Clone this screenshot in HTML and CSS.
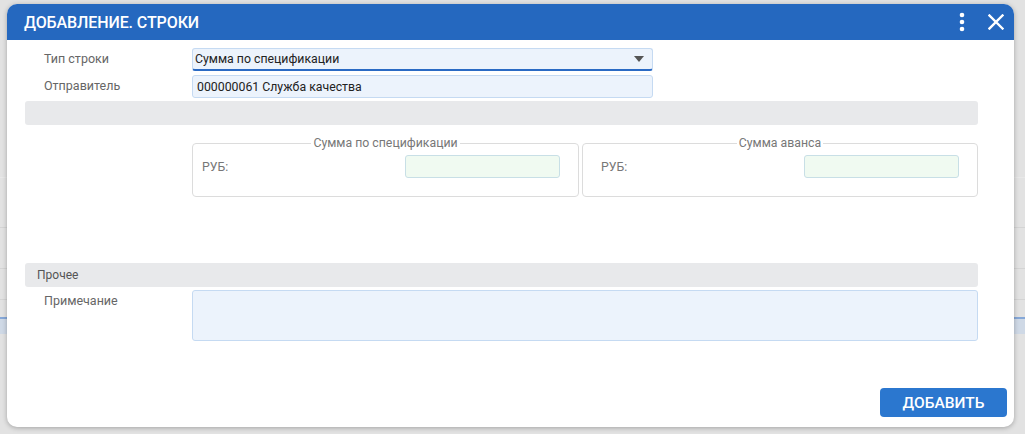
FILE: index.html
```html
<!DOCTYPE html>
<html lang="ru">
<head>
<meta charset="utf-8">
<title>Добавление. Строки</title>
<link rel="stylesheet" href="styles.css">
</head>
<body>
<div class="backdrop">
  <div class="bg-row bg-row-a"></div>
  <div class="bg-row bg-row-b"></div>
  <div class="bg-row bg-row-c"></div>
  <div class="bg-row bg-row-d"></div>
  <div class="bg-row bg-row-sel"></div>
</div>

<div class="modal">
  <div class="modal-header">
    <div class="modal-title">ДОБАВЛЕНИЕ. СТРОКИ</div>
    <div class="header-actions">
      <svg class="icon-kebab" width="6" height="20" viewBox="0 0 6 20"><circle cx="3" cy="3" r="2.3" fill="#fff"/><circle cx="3" cy="10" r="2.3" fill="#fff"/><circle cx="3" cy="17" r="2.3" fill="#fff"/></svg>
      <svg class="icon-close" width="16" height="16" viewBox="0 0 16 16"><path d="M1.5 1.5L14.5 14.5M14.5 1.5L1.5 14.5" stroke="#fff" stroke-width="2.4" stroke-linecap="square"/></svg>
    </div>
  </div>

  <div class="modal-body">
    <div class="form-row">
      <div class="label">Тип строки</div>
      <div class="field select">
        <span>Сумма по спецификации</span>
        <svg class="caret" width="10" height="6" viewBox="0 0 10 6"><path d="M0 0H10L5 6Z" fill="#555"/></svg>
      </div>
    </div>
    <div class="form-row">
      <div class="label">Отправитель</div>
      <div class="field input">000000061 Служба качества</div>
    </div>

    <div class="section-bar"></div>

    <div class="sums">
      <fieldset class="sum-box">
        <legend>Сумма по спецификации</legend>
        <div class="sum-inner">
          <span class="cur">РУБ:</span>
          <div class="money"></div>
        </div>
      </fieldset>
      <fieldset class="sum-box sum-box-wide">
        <legend>Сумма аванса</legend>
        <div class="sum-inner">
          <span class="cur">РУБ:</span>
          <div class="money"></div>
        </div>
      </fieldset>
    </div>

    <div class="section-bar section-bar-title">Прочее</div>

    <div class="form-row form-row-note">
      <div class="label">Примечание</div>
      <div class="field textarea"></div>
    </div>

    <div class="modal-footer">
      <button class="btn-primary">ДОБАВИТЬ</button>
    </div>
  </div>
</div>
</body>
</html>
```

FILE: styles.css
```css
* { box-sizing: border-box; }

html, body {
  margin: 0;
  padding: 0;
  width: 1025px;
  height: 434px;
  overflow: hidden;
  background: #e2e2e2;
  font-family: Roboto, "Noto Sans", Arial, sans-serif;
}

.backdrop {
  width: 1025px;
  height: 434px;
  display: flex;
  flex-direction: column;
  padding-top: 177px;
}

.bg-row {
  border-top: 1px solid #d4d4d4;
}
.bg-row-a { height: 50px; border-top-color: #e8e8e8; }
.bg-row-b { height: 41px; }
.bg-row-c { height: 31px; }
.bg-row-d { height: 18px; }
.bg-row-sel {
  height: 17px;
  border-top: 2px solid #86a8d8;
  background: #cfd9e6;
}

.modal {
  position: absolute;
  left: 7px;
  top: 4px;
  width: 1007px;
  height: 423px;
  background: #fff;
  border-radius: 10px;
  box-shadow: 0 1px 5px rgba(0, 0, 0, 0.28);
  overflow: hidden;
  display: flex;
  flex-direction: column;
}

.modal-header {
  height: 36px;
  flex: none;
  background: #2568bf;
  display: flex;
  align-items: center;
  justify-content: space-between;
  padding: 0 10px 0 17px;
}

.modal-title {
  color: #fff;
  font-size: 16px;
  font-weight: 500;
  letter-spacing: -0.1px;
}

.header-actions {
  display: flex;
  align-items: center;
  gap: 23px;
}
.icon-kebab { display: block; }
.icon-close { display: block; }

.modal-body {
  flex: 1;
  display: flex;
  flex-direction: column;
  padding: 8px 36px 10px 18px;
}

.form-row {
  display: flex;
  align-items: flex-start;
  margin-bottom: 4px;
}

.label {
  width: 167px;
  flex: none;
  padding-left: 19px;
  font-size: 12.5px;
  color: #666;
  line-height: 22px;
}

.field {
  width: 461px;
  height: 23px;
  border: 1px solid #c5daf2;
  border-radius: 3px;
  background: #ecf3fc;
  font-size: 12.3px;
  color: #222;
  display: flex;
  align-items: center;
}

.select {
  padding-left: 2px;
  border-bottom: 2px solid #2a6ac4;
  justify-content: space-between;
  padding-right: 8px;
}
.caret { display: block; }

.input { padding-left: 4px; }

.section-bar {
  height: 24px;
  background: #e8e9eb;
  border-radius: 3px;
  margin-top: -1px;
  font-size: 12px;
  color: #555;
  display: flex;
  align-items: center;
  padding-left: 12px;
}

.sums {
  margin-top: 12px;
  margin-left: 167px;
  display: flex;
  gap: 3px;
}

.sum-box {
  margin: 0;
  padding: 0;
  border: 1px solid #dcdcdc;
  border-radius: 4px;
  min-width: 0;
  height: 60px;
}
.sum-box:first-child { width: 387px; }
.sum-box-wide { flex: 1; }

.sum-box legend {
  margin: 0 auto;
  padding: 0 2px;
  font-size: 12.3px;
  color: #777;
  line-height: 13px;
}

.sum-inner {
  display: flex;
  align-items: center;
  justify-content: space-between;
  padding: 5px 18px 0 9px;
}
.sum-box-wide .sum-inner { padding-left: 18px; }

.cur {
  font-size: 12.3px;
  color: #777;
}

.money {
  width: 155px;
  height: 23px;
  border: 1px solid #c8dfe6;
  border-radius: 3px;
  background: #f0faf1;
}

.section-bar-title {
  margin-top: 66px;
}

.form-row-note {
  margin-top: 3px;
}
.form-row-note .label { line-height: 22px; }

.textarea {
  width: 787px;
  height: 51px;
}

.modal-footer {
  margin-top: auto;
  display: flex;
  justify-content: flex-end;
  margin-right: -29px;
}

.btn-primary {
  width: 127px;
  height: 29px;
  border: none;
  border-radius: 4px;
  background: #2b77cf;
  color: #fff;
  font-family: Roboto, "Noto Sans", Arial, sans-serif;
  font-size: 15.5px;
  font-weight: 500;
  padding: 0;
}
```
